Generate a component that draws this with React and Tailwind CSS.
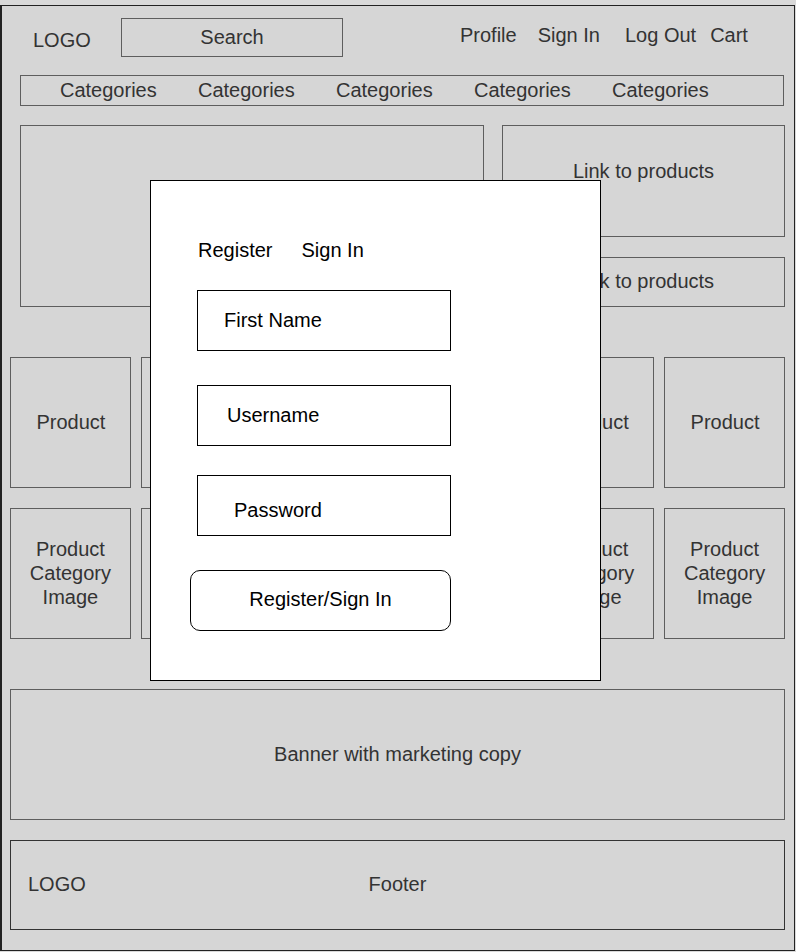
import React from "react";

const box = "border border-[#5e5e5e]";

function Product() {
  return (
    <div className={`${box} h-[131px] flex items-center justify-center pb-[2px] pl-[1px]`}>
      Product
    </div>
  );
}

function CategoryImage() {
  return (
    <div className={`${box} h-[131px] flex items-center justify-center text-center leading-[24px] pb-[2px]`}>
      Product
      <br />
      Category
      <br />
      Image
    </div>
  );
}

export default function App() {
  const cols = [0, 1, 2, 3, 4, 5];
  return (
    <div className="w-[796px] h-[952px] bg-[#d9d9d9] pt-[5px] font-['Liberation_Sans',Arial,sans-serif] text-[20px] leading-[24px] text-[#333]">
      <div className="relative w-[795px] h-[946px] border border-l-2 border-[#222] bg-[#d6d6d6]">
        {/* Header */}
        <div className="flex items-start h-[69px]">
          <div className="w-[119px] pl-[31px] mt-[22px]">LOGO</div>
          <div className={`${box} w-[222px] h-[39px] mt-[12px] flex items-center justify-center pb-[2px]`}>
            Search
          </div>
          <div className="flex mt-[17px] ml-[117px]">
            <span>Profile</span>
            <span className="ml-[21px]">Sign In</span>
            <span className="ml-[25px]">Log Out</span>
            <span className="ml-[14px]">Cart</span>
          </div>
        </div>

        {/* Categories */}
        <div className={`${box} ml-[18px] w-[764px] h-[31px] flex items-center pl-[39px] pb-[1px]`}>
          {cols.slice(0, 5).map((i) => (
            <div key={i} className="w-[138px] shrink-0">
              Categories
            </div>
          ))}
        </div>

        {/* Hero */}
        <div className="flex ml-[18px] mt-[19px] gap-[18px]">
          <div className={`${box} w-[464px] h-[182px]`} />
          <div className="flex flex-col gap-[20px] w-[283px]">
            <div className={`${box} h-[112px] pt-[33px] text-center`}>Link to products</div>
            <div className={`${box} h-[50px] flex items-center justify-center pb-[2px]`}>Link to products</div>
          </div>
        </div>

        {/* Products */}
        <div className="ml-[8px] mt-[50px] w-[775px] grid grid-cols-6 gap-x-[10px] gap-y-[20px]">
          {cols.map((i) => (
            <Product key={"p" + i} />
          ))}
          {cols.map((i) => (
            <CategoryImage key={"c" + i} />
          ))}
        </div>

        {/* Banner */}
        <div className={`${box} ml-[8px] mt-[50px] w-[775px] h-[131px] flex items-center justify-center pb-[2px]`}>
          Banner with marketing copy
        </div>

        {/* Footer */}
        <div className="ml-[8px] mt-[20px] w-[775px] h-[90px] border border-[#333] grid grid-cols-[1fr_auto_1fr] items-center pb-[2px]">
          <div className="pl-[17px]">LOGO</div>
          <div>Footer</div>
          <div />
        </div>

        {/* Modal */}
        <div className="absolute left-[148px] top-[174px] w-[451px] h-[501px] border border-black bg-white text-black">
          <div className="flex mt-[57px] pl-[47px]">
            <span>Register</span>
            <span className="ml-[29px]">Sign In</span>
          </div>
          <div className="ml-[46px] mt-[28px] w-[254px] h-[61px] border border-black flex items-center pl-[26px] pb-[2px]">
            First Name
          </div>
          <div className="ml-[46px] mt-[34px] w-[254px] h-[61px] border border-black flex items-center pl-[29px] pb-[2px]">
            Username
          </div>
          <div className="ml-[46px] mt-[29px] w-[254px] h-[61px] border border-black flex items-center pl-[36px] pt-[8px]">
            Password
          </div>
          <div className="ml-[39px] mt-[34px] w-[261px] h-[61px] border border-black rounded-[10px] flex items-center justify-center pb-[3px]">
            Register/Sign In
          </div>
        </div>
      </div>
    </div>
  );
}
